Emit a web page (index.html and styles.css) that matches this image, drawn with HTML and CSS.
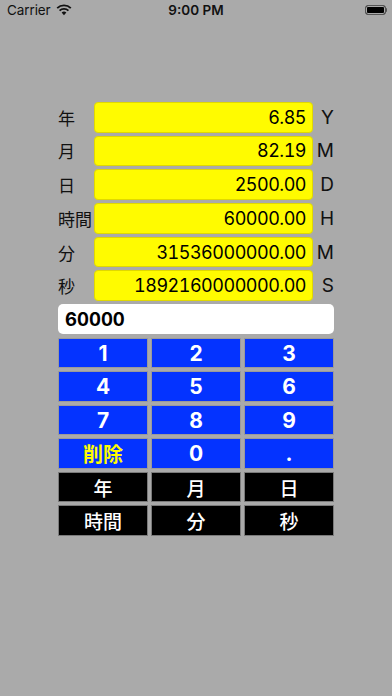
FILE: index.html
```html
<!DOCTYPE html>
<html lang="ja">
<head>
<meta charset="utf-8">
<link rel="stylesheet" href="styles.css">
</head>
<body>
<div class="status">
  <div class="status-left">
    <span class="carrier">Carrier</span>
    <svg class="wifi" width="16" height="12" viewBox="0 0 16 12">
      <path d="M8 11.2 L5.6 8.6 A3.6 3.6 0 0 1 10.4 8.6 Z" fill="#111"/>
      <path d="M3.6 6.6 A6.4 6.4 0 0 1 12.4 6.6" stroke="#111" stroke-width="1.9" fill="none"/>
      <path d="M1.2 4.1 A9.8 9.8 0 0 1 14.8 4.1" stroke="#111" stroke-width="1.9" fill="none"/>
    </svg>
  </div>
  <span class="time">9:00 PM</span>
  <div class="battery"><div class="battery-fill"></div><div class="battery-nub"></div></div>
</div>

<main class="panel">
  <div class="results">
    <div class="row"><span class="label">年</span><span class="field">6.85</span><span class="unit">Y</span></div>
    <div class="row"><span class="label">月</span><span class="field">82.19</span><span class="unit">M</span></div>
    <div class="row"><span class="label">日</span><span class="field">2500.00</span><span class="unit">D</span></div>
    <div class="row"><span class="label">時間</span><span class="field">60000.00</span><span class="unit">H</span></div>
    <div class="row"><span class="label">分</span><span class="field">31536000000.00</span><span class="unit">M</span></div>
    <div class="row"><span class="label">秒</span><span class="field">1892160000000.00</span><span class="unit">S</span></div>
  </div>
  <div class="input">60000</div>
  <div class="keypad">
    <button class="key num">1</button>
    <button class="key num">2</button>
    <button class="key num">3</button>
    <button class="key num">4</button>
    <button class="key num">5</button>
    <button class="key num">6</button>
    <button class="key num">7</button>
    <button class="key num">8</button>
    <button class="key num">9</button>
    <button class="key num del">削除</button>
    <button class="key num">0</button>
    <button class="key num">.</button>
    <button class="key unitkey">年</button>
    <button class="key unitkey">月</button>
    <button class="key unitkey">日</button>
    <button class="key unitkey">時間</button>
    <button class="key unitkey">分</button>
    <button class="key unitkey">秒</button>
  </div>
</main>
</body>
</html>
```
FILE: styles.css
```css
html, body {
  margin: 0;
  padding: 0;
}
body {
  width: 392px;
  height: 696px;
  background: #aaaaaa;
  font-family: "Inter", "Noto Sans CJK JP", sans-serif;
  color: #000;
  overflow: hidden;
}
.status {
  height: 20px;
  display: flex;
  align-items: center;
  justify-content: space-between;
  padding: 0 5px 0 7px;
  position: relative;
}
.status-left {
  display: flex;
  align-items: center;
  gap: 5px;
}
.carrier {
  font-family: "Inter", sans-serif;
  font-size: 13.5px;
  color: #111;
  letter-spacing: -0.1px;
}
.wifi {
  display: block;
  margin-top: -1px;
}
.time {
  position: absolute;
  left: 0;
  right: 0;
  text-align: center;
  font-family: "Inter", sans-serif;
  font-weight: 600;
  font-size: 13.5px;
  color: #111;
}
.battery {
  display: flex;
  align-items: center;
}
.battery-fill {
  width: 19px;
  height: 8px;
  background: #000;
  border: 1.5px solid #555;
  border-radius: 3px;
  box-shadow: inset 0 0 0 1px #aaa;
}
.battery-nub {
  width: 1.5px;
  height: 4px;
  background: #555;
  border-radius: 0 1px 1px 0;
}
.panel {
  width: 276px;
  margin: 82px auto 0;
  display: flex;
  flex-direction: column;
}
.results {
  display: flex;
  flex-direction: column;
  gap: 3.2px;
}
.row {
  display: grid;
  grid-template-columns: 36px 219px 21px;
  height: 30.5px;
  align-items: center;
}
.label {
  font-family: "Noto Sans CJK JP", sans-serif;
  font-size: 17px;
  line-height: 1;
  color: #111;
}
.field {
  height: 100%;
  box-sizing: border-box;
  background: #fffb00;
  border-radius: 4px;
  border: 0.5px solid #e0d800;
  display: flex;
  align-items: center;
  justify-content: flex-end;
  padding-right: 6px;
  font-family: "Inter", sans-serif;
  font-size: 18px;
  letter-spacing: -0.5px;
  font-variant-numeric: tabular-nums;
  color: #000;
}
.unit {
  text-align: right;
  font-family: "Inter", sans-serif;
  font-size: 19px;
  color: #111;
}
.input {
  margin-top: 3px;
  height: 30px;
  background: #fff;
  border-radius: 5px;
  display: flex;
  align-items: center;
  padding-left: 7px;
  font-family: "Inter", sans-serif;
  font-weight: 700;
  font-size: 18.5px;
  font-variant-numeric: tabular-nums;
  color: #000;
}
.keypad {
  margin-top: 4px;
  display: grid;
  grid-template-columns: repeat(3, 90px);
  grid-auto-rows: 30.5px;
  gap: 3px;
}
.key {
  margin: 0;
  padding: 0;
  border: 1px solid #9a9a9a;
  box-sizing: border-box;
  display: flex;
  align-items: center;
  justify-content: center;
  font-family: "Inter", "Noto Sans CJK JP", sans-serif;
  cursor: pointer;
}
.num {
  background: #0433ff;
  color: #fff;
  font-weight: 700;
  font-size: 21px;
}
.del {
  color: #fffb00;
  font-family: "Noto Sans CJK JP", sans-serif;
  font-weight: 700;
  font-size: 20px;
}
.unitkey {
  background: #000;
  color: #fff;
  font-family: "Noto Sans CJK JP", sans-serif;
  font-weight: 500;
  font-size: 19px;
  border-color: #7a7a7a;
}
```
